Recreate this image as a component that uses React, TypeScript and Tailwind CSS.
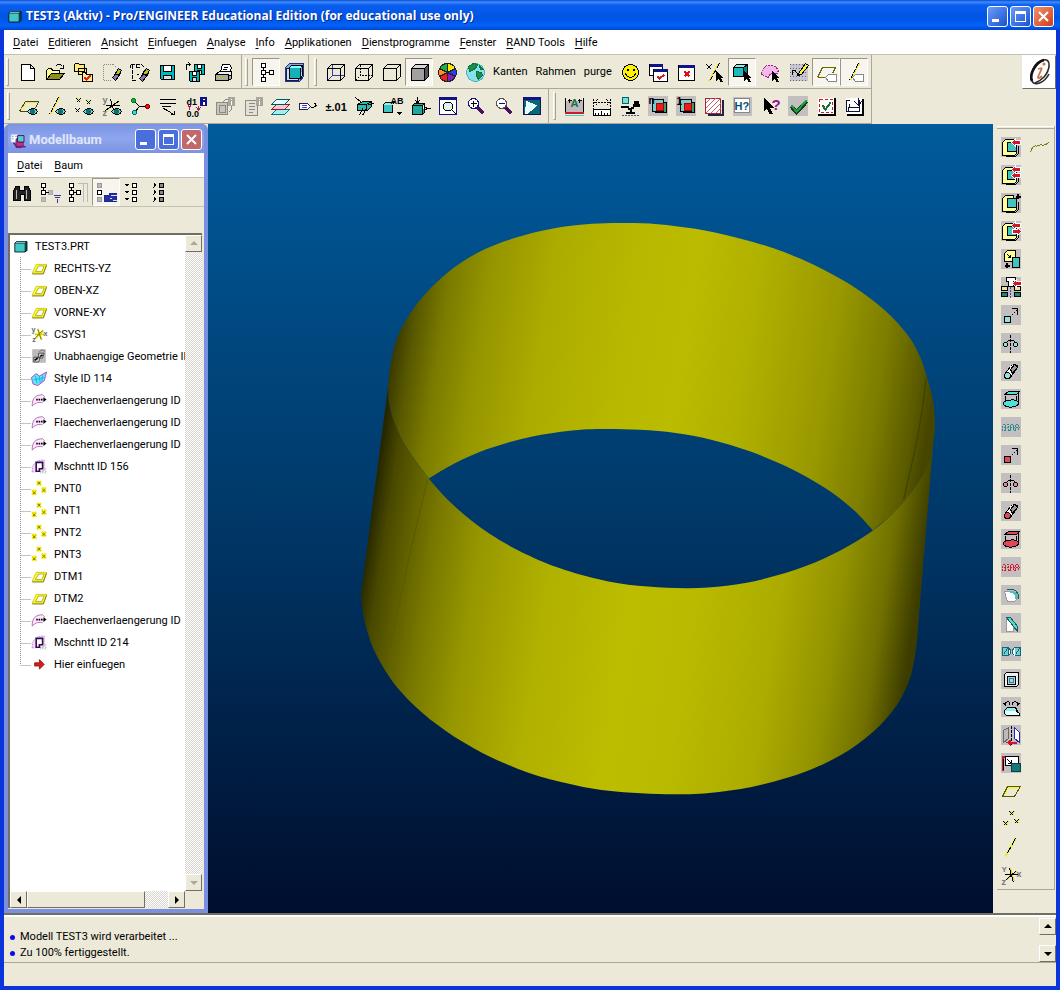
import React from "react";

/* ---------- icon drawing ---------- */

type Shape = [d: string, stroke?: string, fill?: string, width?: number, dash?: string];
type Glyph = { t: string; x: number; y: number; size: number; fill: string };
type Icon = { s: Shape[]; t?: Glyph[]; bg?: string };

const K = "#000";
const N = "none";
const T = "#3fc4c0";
const Y = "#ffff99";
const R = "#d01828";
const G = "#8c8c84";
const BG = "#c3bfc1";

const eye: Shape[] = [
  ["M9 15c3-4 8-4 10 0c-2 4-7 4-10 0z", K, "#9cc", 1],
  ["M12 15a2 2 0 1 0 4 0a2 2 0 1 0-4 0z", "#077", "#077", 1],
];
const cursor: Shape[] = [["M11 8v11l3-3l2 4l2-1l-2-4h3z", K, K, 0]];
const floppy = (x: number, y: number, k: number): Shape[] => [
  [`M${x} ${y}h${k}v${k}h${1 - k}l-1-1z`, K, "#00b8b8"],
  [`M${x + 3} ${y}h${k - 6}v${Math.round(k / 2) - 1}h${6 - k}z`, K, "#fff"],
  [`M${x + 3} ${y + k}v-4h${k - 6}v4z`, K, "#ddd"],
];
const cube = (inner: Shape[]): Shape[] => [
  ...inner,
  ["M2 6h13v12H2zM2 6l4-4h13M15 6l4-4v12l-4 4", K],
];
const padYellow: Shape[] = [
  ["M1 5l3-3h8v3H6v9h9v2l-2 2H1z", K, Y, 1],
  ["M6 5h9v9H6z", K, T],
  ["M17 8v8l-3 3H4", K],
];
const arrowL = (x: number, y: number): Shape[] => [
  [`M${x} ${y}l4-4v2h5v4h-5v2z`, "#fff", R, 1],
];
const arrowR = (x: number, y: number): Shape[] => [
  [`M${x} ${y}l-4-4v2h-5v4h5v2z`, "#fff", R, 1],
];
const plus = (x: number, y: number): Shape => [`M${x - 2} ${y}h5M${x + 0.5} ${y - 2.5}v5`, K, N, 2];
const xs = (c: string): Shape[] => [
  ["M8 2l4 4M12 2l-4 4M2 12l4 4M6 12l-4 4M13 10l4 4M17 10l-4 4", c],
];
const swept = (c: string): Shape[] => [
  ["M3 5l4-3h11l-3 3H3z", K, c],
  ["M4 6v5M15 6v7M17 3v8", K],
  ["M2 14c0-4 15-5 15-1c0 6-15 6-15 1z", K, c],
];
const helix = (c: string): Shape[] => [
  ["M3 7H1v6h3V7h3v6M7 13h2V7M9 7h3v6M12 13h2V7M14 7h3v6", c, N, 1, "2 1"],
  ["M2 10h16", c, N, 1, "2 1"],
];
const extrude = (c: string): Shape[] => [
  ["M3 11h6v6H3z", K, c],
  ["M10 10l5-5", K, N, 1, "2 1"],
  ["M10 3h6v6", K],
];
const revolve = (c: string): Shape[] => [
  ["M9 1v18", K, N, 1, "3 1"],
  ["M2 11a2 2 0 1 0 4 0a2 2 0 1 0-4 0M12 11a2 2 0 1 0 4 0a2 2 0 1 0-4 0", K, c],
  ["M5 9c2-3 7-3 9 0", K],
];
const pipe = (c: string): Shape[] => [
  ["M3 13l6-8c2-3 8-2 7 1l-7 10z", K, "#fff"],
  ["M9 8l4-5l3 3l-5 6z", K, "#999"],
  ["M3 14a3 3 0 1 0 6 0a3 3 0 1 0-6 0z", K, c],
];
const doubleBox = (): Shape[] => [
  ["M7 6h11v10H7z", K, "#3a9a6a"],
  ["M4 3h11v12H4z", K, "#7cc"],
  ["M8 7h7v7H8z", "#a00808", "#f01818"],
];

const I: Record<string, Icon> = {
  new: { s: [["M4 2h9l4 4v12H4zM13 2v4h4", K, "#fff"]] },
  open: {
    s: [
      ["M1 17V8l2-2h3l1 2h7v4", K, Y],
      ["M1 17l5-6h13l-5 6z", K, "#8f8f20"],
      ["M10 4c2-3 5-3 7 0M18 2v4h-4", K],
    ],
  },
  workdir: {
    s: [
      ["M1 2l1-1h3l1 1h5v7H1zM5 6h8v6H5z", K, "#ffee70"],
      ["M9 10h3l1 2h6v7H9z", K, "#ffee88"],
      ["M11 15l2 2l4-4", "#e02020", N, 2],
    ],
  },
  erase: {
    s: [
      ["M2 2h10l3 3M2 2v16h8", G, N, 1, "1 1"],
      ["M11 15l3 3l5-7l-2-3z", K, "#8c7ab0"],
      ["M14 11l3-5l3 2l-3 5z", K, "#bcbc20"],
    ],
  },
  erase2: {
    s: [
      ["M1 2h11l3 3M3 2v16h4M1 2v3", K, N, 1, "4 1"],
      ["M7 2v3h3M7 12h2", K],
      ["M10 16l3 3l6-8l-2-3z", K, "#8c7ab0"],
      ["M13 11l4-5l3 2l-3 5z", K, "#bcbc20"],
    ],
  },
  save: { s: floppy(3, 3, 14) },
  saveall: { s: [...floppy(9, 2, 10), ...floppy(4, 9, 10), ["M1 7V2h4M3 0l2 2l-2 2", K]] },
  print: {
    s: [
      ["M7 9L9 2h7l2 3l-2 5z", K, "#fff"],
      ["M10 5h4M9 7h4", K],
      ["M2 12l4-3h12v3l-3 2H2z", K, "#eee"],
      ["M2 12h13v6H2zM15 14l3-2v4l-3 2z", K, "#aaa"],
      ["M4 15h8", "#c0c000"],
    ],
  },
  tree: { s: [["M5 1h4v4H5zM5 8h4v4H5zM5 15h4v4H5zM13 8h4v4h-4z", K, "#fff"], ["M7 5v3M7 12v3M9 10h4", K]] },
  window3d: {
    s: [
      ["M1 5l4-4h14v13l-4 5H1z", "#238", "#88a8d8"],
      ["M2 6h12v12H2z", "#124", "#cde"],
      ["M5 5h11v11H5z", K, "#18b0b8"],
      ["M5 5l2-2h11l-2 2M18 3v10l-2 3", K, "#8ff"],
    ],
  },
  wire: { s: cube([["M2 18l5-5h12M7 13V2", "#3838a8"]]) },
  hidden: { s: cube([["M2 18l5-5h12M7 13V2", K, N, 1, "2 1"]]) },
  nohidden: { s: cube([]) },
  shaded: {
    s: [
      ["M2 6h13v12H2z", K, "#a4a0a0"],
      ["M2 6l4-4h13l-4 4z", K, "#d8d8d8"],
      ["M15 6l4-4v12l-4 4z", K, "#555"],
    ],
  },
  wheel: {
    s: [
      ["M10 10L10 1A9 9 0 0 1 18 6z", "#222", "#ffe800"],
      ["M10 10L18 6A9 9 0 0 1 18 14z", "#222", "#2040ff"],
      ["M10 10L18 14A9 9 0 0 1 10 19z", "#222", "#8020c0"],
      ["M10 10L10 19A9 9 0 0 1 2 14z", "#222", "#f02020"],
      ["M10 10L2 14A9 9 0 0 1 2 6z", "#222", "#ff9020"],
      ["M10 10L2 6A9 9 0 0 1 10 1z", "#222", "#20b040"],
    ],
  },
  globe: {
    s: [
      ["M1 10a9 9 0 1 0 18 0a9 9 0 1 0-18 0z", "#48b8c8", "#88e0e8"],
      ["M3 4l5-3l4 1l-1 3l-4 3l-3 1zM11 9l5 1l1 3l-4 4l-2-4zM14 3l4 4l-3 0z", "#107040", "#189048"],
    ],
  },
  smile: {
    s: [
      ["M2 10a8 8 0 1 0 16 0a8 8 0 1 0-16 0z", K, "#fff200"],
      ["M7 6v2M13 6v2", K, N, 2],
      ["M5 11c2 5 8 5 10 0", K],
    ],
  },
  winCheck: {
    s: [
      ["M1 2h13v11H1z", K, "#fff"],
      ["M1 3h13", "#118", N, 3],
      ["M5 7h14v12H5z", K, "#fff"],
      ["M5 8h14", "#118", N, 3],
      ["M9 14l2 2l5-4", R, N, 2],
    ],
  },
  winX: { s: [["M2 3h16v15H2z", K, "#fff"], ["M2 4h16", "#118", N, 3], ["M8 9l5 5M13 9l-5 5", "#e01010", N, 2]] },
  axisSel: { s: [["M2 2l5 5M7 2l-5 5", K], ["M14 1L4 19", "#e8e020", N, 1], ["M15 1L5 19", K, N, 1, "5 2"], ...cursor] },
  cubeSel: {
    s: [
      ["M1 5h10v9H1z", K, "#20b8b8"],
      ["M1 5l3-3h11l-4 3z", K, "#8ee"],
      ["M11 5l4-3v9l-4 3z", K, "#088"],
      ...cursor,
    ],
  },
  quiltSel: { s: [["M1 12C1 2 13-1 18 8l-2 4c-4-3-6-2-8 3z", "#a020a0", "#f4b8e8", 1, "2 1"], ...cursor] },
  sketch: {
    s: [
      ["M1 1h18v17H1z", N, "#c8c4d0"],
      ["M1 2h17M1 6h17M1 10h17M1 14h17M1 18h17", "#667", N, 1, "1 2"],
      ["M5 13c-4-6 1-7 3-3s4 3 4-2", K],
      ["M10 11l7-10l3 2l-7 9l-4 1z", K, "#ffee40"],
    ],
  },
  planeTag: {
    s: [["M1 15L6 5h13l-3 6M1 15h8", "#6a6a00"], ["M9 15l3-3h8v7h-8z", "#888", "#fff"]],
  },
  axisTag: { s: [["M14 1L5 18", K, N, 1, "5 1"], ["M15 1L6 18", "#e8e820"], ["M8 15l3-3h8v7h-8z", "#888", "#fff"]] },

  planeEye: { s: [["M1 15L7 5h13l-3 7M1 15h8", "#4a4a00"], ["M2 14L8 6h10", "#f0e840"], ...eye] },
  axisEye: { s: [["M12 1L3 18", K, N, 1, "5 1"], ["M13 1L4 18", "#e8e820"], ...eye] },
  pntEye: { s: [["M3 1l4 4M13 3l4 4", "#e8e820"], ["M2 2l4 4M6 2l-4 4M12 4l4 4M16 4l-4 4M1 12l4 4M5 12l-4 4", K], ...eye] },
  csysEye: {
    s: [["M4 14L18 4", "#e8e820"], ["M3 14L17 4M3 9h14M8 3l4 14", K], ...eye],
    t: [{ t: "y", x: 0, y: 6, size: 9, fill: "#777" }, { t: "z", x: 0, y: 19, size: 9, fill: "#777" }],
  },
  nodes: {
    s: [
      ["M3 4l6 6l-5 6M9 10h8", K],
      ["M1 4a2 2 0 1 0 4 0a2 2 0 1 0-4 0z", "#072", "#10b040"],
      ["M2 16a2 2 0 1 0 4 0a2 2 0 1 0-4 0z", "#066", "#30e0e0"],
      ["M15 10a2 2 0 1 0 4 0a2 2 0 1 0-4 0z", "#800", "#f01010"],
    ],
  },
  notes: { s: [["M1 3h16M1 7h16M3 10h9", K], ["M5 12l4 2l6 4M12 18h4v-4", K]] },
  dims: {
    s: [["M3 9v4M1 11l2-3l2 3M12 9v4M10 11l2 3l2-3", "#b01850", N, 1], ["M14 1h6v8h-6z", "#118", "#118"], ["M17 5v3M17 2v1", "#fff", N, 2]],
    t: [{ t: "d1", x: 0, y: 8, size: 9, fill: K }, { t: "0.0", x: 0, y: 20, size: 9, fill: K }],
  },
  infoBox: {
    s: [["M2 6h11v12H2z", G, "#c8c4bc"], ["M5 9h6v7H5zM8 6l3-3h6v10l-3 3", G], ["M14 1h6v8h-6z", "#aaa69c", "#aaa69c"], ["M17 4v4M17 2v1", "#fff"]],
  },
  infoDoc: { s: [["M3 4h12v15H3z", G, "#e4e0d8"], ["M6 7h6M6 10h6M6 13h6M6 16h4", G], ["M14 1h6v8h-6z", "#aaa69c", "#aaa69c"], ["M17 4v4M17 2v1", "#fff"]] },
  layers: {
    s: [
      ["M1 18l5-5h13l-5 5z", "#078", "#a0f0f0"],
      ["M1 13l5-5h13l-5 5z", "#a01030", "#f8c8d0"],
      ["M1 8l5-5h13l-5 5z", "#056", "#e0ffff"],
    ],
  },
  tag: { s: [["M1 7h8l3 3l-3 3H1z", "#224", "#fff"], ["M3 9h5M3 11h5", "#44c"], ["M12 11c6 0 7-3 4-4", K]] },
  tol: { s: [], t: [{ t: "±.01", x: -1, y: 14, size: 11, fill: K }] },
  orient: {
    s: [["M3 8l5-3h9v5l-4 4H3z", K, "#30b8b0"], ["M3 8h9v6M12 8l5-3", K], ["M1 1l6 5M14 8l6-1M8 12l-3 7M8 19l4-7", K]],
  },
  views: {
    s: [["M1 8h9v8H1z", K, T], ["M1 8l2-2h9l-2 2", K, "#9ee"], ["M14 15h6l-3 4z", K, K, 0]],
    t: [{ t: "AB", x: 8, y: 7, size: 9, fill: K }],
  },
  refit: { s: [["M2 9h10v9H2zM2 9l2-2h10l-2 2M14 7v9l-2 2", K, "#20a8a0"], ["M7 0v6M5 4l2 3l2-3M20 12h-5M17 10l-3 2l3 2", K]] },
  zoomWin: { s: [["M1 1h17v17H1z", "#118", "#fff"], ["M1 2h17", "#118", N, 3], ["M5 10a4 4 0 1 0 9 0a4 4 0 1 0-9 0M13 13l5 5", K, "#e0f0f0", 1]] },
  zoomIn: { s: [["M2 7a5 5 0 1 0 10 0a5 5 0 1 0-10 0z", "#118", "#fff"], ["M7 4v6M4 7h6", K], ["M11 11l6 6", "#4a1060", N, 3]] },
  zoomOut: { s: [["M2 7a5 5 0 1 0 10 0a5 5 0 1 0-10 0z", "#555", "#fff"], ["M4 7h6", "#118"], ["M11 11l6 6", "#4a1060", N, 3]] },
  saved: { s: [["M1 1h17v17H1z", "#115", "#086878"], ["M1 2h17", "#118", N, 3], ["M4 5l10 4L5 17H3z", "#fff", "#dff"]] },

  fitA: {
    s: [["M1 4h18v12H1z", N, "#c0b8bc"], ["M1 1v14M19 1v14M3 4h4M13 4h4M5 2v4M15 2v4", K], ["M0 16h19", R, N, 2], ["M0 19h19", "#38d8d8"]],
    t: [{ t: "A", x: 6, y: 10, size: 11, fill: "#187040" }],
  },
  ruler: { s: [["M1 2v10M18 2v10M2 6h15M5 3L2 6l3 3M14 3l3 3l-3 3", K, N, 1, "2 1"], ["M1 13h17v6H1z", K, "#fff"], ["M3 16v3M6 16v3M9 14v5M12 16v3M15 16v3", K]] },
  scale: { s: [["M2 1h6v6H2z", "#066", "#7dd"], ["M0 9h8v2H0zM7 12l6-2v2l-6 2zM12 7h7v3h-7zM13 4h5v3h-5zM9 12h2v4H9zM5 15h9v2H5z", K, K, 0], ["M1 19h17", "#557", N, 1, "2 1"]] },
  partN: { s: doubleBox(), t: [{ t: "n", x: 0, y: 7, size: 10, fill: K }], bg: BG },
  part1: { s: doubleBox(), t: [{ t: "1", x: 0, y: 8, size: 10, fill: K }], bg: BG },
  hatch: {
    s: [["M1 2h15v15H1z", "#a02838", "#fff"], ["M1 7l5-5M1 12L11 2M1 17L16 2M6 17L16 7M11 17l5-5", "#d06070", N, 1], ["M18 3v15H3", "#224", N, 2]],
  },
  hq: { s: [["M0 0h19v19H0z", N, BG], ["M2 2h15v14H2z", "#888", "#fff"]], t: [{ t: "H?", x: 2, y: 13, size: 11, fill: "#055070" }] },
  whats: { s: [["M3 1v14l3-3l3 6l3-1l-3-6h4z", K, K, 0]], t: [{ t: "?", x: 11, y: 13, size: 15, fill: "#901890" }] },
  check: { s: [["M3 10l5 6L18 5", "#10401a", N, 4], ["M3 9l5 6L18 4", "#20a040", N, 2]], bg: BG },
  checkBox: { s: [["M1 1h17v17H1z", N, "#fff"], ["M3 3h13v13H3z", R, N, 1, "3 2"], ["M6 9l3 4l5-7", "#187030", N, 2], ["M18 1v17H1", K, N, 2]] },
  importBox: { s: [["M1 1h16v16H1z", N, "#fff"], ["M5 4H2v11h13V4h-2M4 10v4M14 1v7M10 5l4 4l3-4M5 7v4h9", "#113", N, 1], ["M18 2v16H2", K, N, 2]] },

  binoc: { s: [["M1 18V9l2-5h4v4h5V4h4l2 5v9h-6v-6h-4v6z", K, "#222"], ["M4 7v9M14 7v9", "#bbb"]] },
  filter: { s: [["M1 1h4v4H1zM1 8h4v4H1z", K, "#fff"], ["M1 15h4v4H1zM8 8h4v4H8z", "#aaa", "#bbb"], ["M3 5v3M5 10h3", K], ["M13 13h7M14 15h5M16 17h1v3", "#339"]] },
  columns: { s: [["M9 1h10v18M15 1v18", "#bbb"], ["M1 1h4v4H1zM1 8h4v4H1zM1 15h4v4H1zM8 8h4v4H8z", K, "#fff"], ["M3 5v3M3 12v3M5 10h3", K]] },
  featDisp: { s: [["M1 1h4v4H1zM1 15h4v4H1z", "#999", "#bbb"], ["M1 8h4v4H1z", K, "#fff"], ["M8 13h5v-2h7v8H8z", "#229", "#239"], ["M14 13h6M13 16h2M16 18h4", "#dde"]] },
  expandAll: { s: [["M-1 1h6l-3 3zM-1 8h6l-3 3zM-1 15h6l-3 3z", K, K, 0], ["M8 1h4v4H8zM8 8h4v4H8zM8 15h4v4H8z", K, "#fff"]] },
  collapseAll: { s: [["M1 0v5l3-2.5zM1 7v5l3-2.5zM1 14v5l3-2.5z", K, K, 0], ["M7 1h4v4H7zM7 8h4v4H7zM7 15h4v4H7z", K, "#888"]] },

  refAdd: { s: [...padYellow, ...arrowL(10, 5)], bg: BG },
  refTwo: { s: [...padYellow, ...arrowL(10, 4), ...arrowL(10, 10)], bg: BG },
  refPlus: { s: [...padYellow, plus(16, 3)], bg: BG },
  refSwap: { s: [...padYellow, ...arrowL(10, 4), ...arrowR(20, 10)], bg: BG },
  refCopy: { s: [["M3 4l3-3h8v11H3z", K, Y], ["M6 5l3 3M9 5v3H6", K], ["M11 8h7v10h-7z", K, T], plus(5, 16)], bg: BG },
  section: {
    s: [["M5 0h9v4h-2v5H7V4H5z", K, "#fff"], ["M0 9h6v4H0zM13 9h6v4h-6z", K, "#e8e890"], ["M0 15h6v4H0zM13 15h6v4h-6z", K, "#188878"], ["M9 9v11", "#44a", N, 1, "2 1"], ...arrowL(11, 6)],
    bg: BG,
  },
  ext: { s: extrude("#8ee4dc"), bg: BG },
  rev: { s: revolve("#8ee4dc"), bg: BG },
  pip: { s: pipe("#8ee4dc"), bg: BG },
  swp: { s: swept("#50e0d8"), bg: BG },
  hel: { s: helix("#2a8c8c"), bg: BG },
  extR: { s: extrude("#e04858"), bg: BG },
  revR: { s: revolve("#e88890"), bg: BG },
  pipR: { s: pipe("#e04858"), bg: BG },
  swpR: { s: swept("#e04858"), bg: BG },
  helR: { s: helix("#d02030"), bg: BG },
  round: { s: [["M3 6h7c4 0 6 3 6 7l-3 3H6z", "#999", "#fff"], ["M6 4c7-2 12 3 11 10", "#106060", N, 1], ["M8 6c5 0 7 3 7 7", T, N, 2]], bg: BG },
  chamfer: { s: [["M5 4l3 3l4 6v5H5z", "#999", "#fff"], ["M5 4h4l7 9v5l-4-5z", "#106060", "#60d8d0"]], bg: BG },
  hole: { s: [["M1 6h6v8H1zM13 6h6v8h-6z", "#167", "#7cc"], ["M7 6c3 3 3 6 0 8M13 6c-3 3-3 6 0 8", "#167", "#fff"], ["M2 13l4-6M14 13l4-6", "#167"]], bg: BG },
  shell: { s: [["M3 5l2-2h12v12l-2 2H3z", K, "#eee"], ["M6 7h8v8H6z", K, "#a0d8e0"], ["M8 9h4v4H8z", "#479"]], bg: BG },
  draft: { s: [["M3 13h11l4 3v2H5l-2-2z", K, "#e8ffff"], ["M3 13l3-3h8l2 4", K, "#8ee"], ["M3 6c4-3 5-2 5 1M17 6c-4-3-6-2-6 1", K, N, 1], ["M0 5h4v4zM19 5h-4v4z", K, K, 0]], bg: BG },
  mirror: { s: [["M2 5l5-3v11l-5 4z", "#666", "#bbb"], ["M13 2l5 5v10l-5-4z", "#2020c0", "#fff"], ["M10 0v20", K, N, 1, "3 1"], ["M5 17l4-3v2h6v2H9v2z", R, R, 0]], bg: BG },
  copyGeo: { s: [["M1 17V3h3", R, N, 2], ["M4 3h13v9H4zM2 5v11", K, "#fff"], ["M6 6l4 4M10 6v4H6", K], ["M10 10h9v8h-9z", "#044", "#187878"]], bg: BG },
  plane: { s: [["M2 14L7 6h11", "#f0f060", N, 2], ["M1 15L6 5h13l-6 10z", "#5a5a00"]] },
  points: { s: [["M9 2l4 4M13 2l-4 4M3 12l4 4M7 12l-4 4M14 10l4 4M18 10l-4 4", "#e4e030", N, 1], ...xs(K)] },
  axis: { s: [["M14 1L4 19", "#e8e840", N, 2], ["M14 1L4 19", K, N, 1, "7 3"]] },
  csys: {
    s: [["M6 14L16 5M9 3l4 13", "#d8d820"], ["M5 14L15 5M3 9h13M8 3l4 14", K]],
    t: [{ t: "Y", x: 0, y: 6, size: 8, fill: "#777" }, { t: "x", x: 15, y: 11, size: 9, fill: "#777" }, { t: "z", x: 0, y: 19, size: 9, fill: "#777" }],
  },
  curve: { s: [["M1 15c3-10 5-5 8-7s6 2 10-3", "#7c7c18"]] },

  tPart: { s: [["M3 6l2-2h13v11l-2 2H3z", K, "#40c8c8"], ["M5 4h13l-2 2H3z", "#033", "#b0f4f0"], ["M16 6l2-2v11l-2 2z", K, "#088"]] },
  tPlane: { s: [["M1 16L6 5h13l-4 11z", "#c8c000", "#ffff30", 1], ["M5 14l4-7h7l-3 7z", "#a8a000", "#fff"], ["M1 17h14l4-11", "#706800"]] },
  tCsys: {
    s: [["M5 15L15 5M4 10h12M8 3l5 14", "#d8d000", N, 2], ["M5 14L14 5M8 4l4 12", "#777000"]],
    t: [{ t: "y", x: 0, y: 7, size: 9, fill: "#666" }, { t: "x", x: 15, y: 12, size: 9, fill: "#666" }, { t: "z", x: 1, y: 19, size: 9, fill: "#666" }],
  },
  tGeo: { s: [["M1 1h17v17H1z", N, "#bbb"], ["M3 11h8l-2 6H3zM9 6h7l-2 6H9z", "#333", "#ddd"], ["M4 15l4-3M11 10l3-2", K, N, 2], ["M10 4c3-3 5-2 7 0", "#555"]] },
  tStyle: { s: [["M0 9l6-5l4 3l9-5l-3 11l-8 6l-6-2z", "#b828c0", "#60e8f8", 1], ["M5 7l2 9M10 7l1 9M14 6l-1 8M3 12l13-3", "#20a0d8"]] },
  tSurf: { s: [["M2 15C2 7 6 4 13 4l3 4l-2 4c-5-1-9 0-12 3z", N, "#fbe8fb"], ["M1 17C1 7 5 3 14 3M1 17c5-5 9-5 13-4M14 3l3 3", "#a848b0", N, 1], ["M6 9h8", K, N, 2, "2 1"], ["M15 6l4 3l-4 3z", K, K, 0]] },
  tMerge: { s: [["M1 17C1 6 6 2 16 2v14z", "#c078c8", "#f4dcf6", 1, "2 1"], ["M6 5h8v8h-4v3H6z", "#301050", "#fff", 2], ["M11 18h7v-6", "#70a070", N, 1, "1 1"]] },
  tPnt: { s: [["M7 1l5 5M12 1l-5 5M1 12l5 6M6 12l-5 6M13 9l5 6M18 9l-5 6", "#f0e800", N, 3], ["M8 2l3 3M11 2l-3 3M2 14l3 3M5 14l-3 3M14 11l3 3M17 11l-3 3", "#6a6400"]] },
  tArrow: { s: [["M4 8h6V4l6 6l-6 6v-4H4z", "#801010", "#e01818"]] },
  app: { s: [["M1 3h8v9H1z", "#ddd", "#fff"], ["M2 5h2M6 5h2M2 8h2", "#39c"], ["M7 8h9v9l-3 2H7z", "#602080", "#c03070"], ["M9 4h8v8H9z", "#205", "#60c8c8"], ["M4 13l4 5h11", "#602080", N, 2]] },
};

function Ico({ name, small }: { name: string; small?: boolean }) {
  const { s, t, bg } = I[name];
  return (
    <svg
      viewBox="-0.5 -0.5 20 20"
      className={`shrink-0 ${small ? "size-4" : "size-5"}`}
      shapeRendering={small ? "auto" : "crispEdges"}
      aria-hidden="true"
      overflow="visible"
    >
      {bg && <rect x="-0.5" y="-0.5" width="20" height="20" fill={bg} />}
      {s.map(([d, stroke = K, fill = N, w = 1, dash], i) => (
        <path key={i} d={d} stroke={w ? stroke : N} fill={fill} strokeWidth={w} strokeDasharray={dash} />
      ))}
      {t?.map((g) => (
        <text key={g.t + g.y} x={g.x} y={g.y} fontSize={g.size} fill={g.fill} fontWeight={700} fontFamily="Liberation Sans, sans-serif">
          {g.t}
        </text>
      ))}
    </svg>
  );
}

/* ---------- toolbar parts ---------- */

function ToolButton({ name, pressed }: { name: string; pressed?: boolean }) {
  return (
    <button
      type="button"
      aria-label={name}
      aria-pressed={pressed}
      className={`flex size-7 shrink-0 items-center justify-center border ${
        pressed ? "border-t-[#9a978a] border-r-white border-b-white border-l-[#9a978a] bg-[#f7f5ee]" : "border-transparent"
      }`}
    >
      <Ico name={name} />
    </button>
  );
}

function Handle() {
  return <div className="mr-1 h-7 w-[3px] shrink-0 border border-t-white border-r-[#a5a294] border-b-[#a5a294] border-l-white" />;
}

function Bar({ children, className = "" }: { children: React.ReactNode; className?: string }) {
  return (
    <div className={`flex h-full items-center border-r border-b border-[#aca899] ${className}`}>
      <Handle />
      {children}
    </div>
  );
}

function Tools({ names, pressed = [] }: { names: string[]; pressed?: string[] }) {
  return (
    <>
      {names.map((n) => (
        <ToolButton key={n} name={n} pressed={pressed.includes(n)} />
      ))}
    </>
  );
}

function MenuItem({ label }: { label: string }) {
  return (
    <button type="button" className="whitespace-nowrap">
      <span className="underline underline-offset-2">{label[0]}</span>
      {label.slice(1)}
    </button>
  );
}

function WinButtons({ inactive }: { inactive?: boolean }) {
  const base = "flex size-[21px] items-center justify-center rounded-[3px] border border-white";
  const blue = inactive ? "bg-[#4a6fdc]" : "bg-linear-to-br from-[#6a9cf8] to-[#1c50d0]";
  const red = inactive ? "bg-[#c0686c]" : "bg-linear-to-br from-[#f09070] to-[#d03a10]";
  return (
    <div className="flex gap-[2px]">
      <button type="button" aria-label="Minimieren" className={`${base} ${blue}`}>
        <svg viewBox="0 0 17 17" className="size-[17px]"><path d="M3 11h7v3H3z" fill="#fff" /></svg>
      </button>
      <button type="button" aria-label="Maximieren" className={`${base} ${blue}`}>
        <svg viewBox="0 0 17 17" className="size-[17px]"><path d="M3 3h11v11H3zM4 6v7h9V6z" fill="#fff" fillRule="evenodd" /></svg>
      </button>
      <button type="button" aria-label="Schliessen" className={`${base} ${red}`}>
        <svg viewBox="0 0 17 17" className="size-[17px]"><path d="M4 4l9 9M13 4l-9 9" stroke="#fff" strokeWidth="2" /></svg>
      </button>
    </div>
  );
}

const arrows = {
  up: "M4 9h8L8 5z",
  down: "M4 6h8l-4 4z",
  left: "M10 4v8L6 8z",
  right: "M6 4v8l4-4z",
};

function ScrollButton({ dir, dim }: { dir: keyof typeof arrows; dim?: boolean }) {
  return (
    <button
      type="button"
      aria-label={dir}
      className="flex size-[17px] shrink-0 items-center justify-center border border-t-white border-r-[#716f64] border-b-[#716f64] border-l-white bg-[#ece9d8]"
    >
      <svg viewBox="0 0 16 16" className="size-4 shrink-0"><path d={arrows[dir]} fill={dim ? "#aca899" : "#000"} /></svg>
    </button>
  );
}

const dither = "bg-[conic-gradient(#d8d5cf_25%,#fff_0_50%,#d8d5cf_0_75%,#fff_0)] bg-[length:2px_2px]";

/* ---------- model tree ---------- */

const nodes: [icon: string, label: string][] = [
  ["tPlane", "RECHTS-YZ"],
  ["tPlane", "OBEN-XZ"],
  ["tPlane", "VORNE-XY"],
  ["tCsys", "CSYS1"],
  ["tGeo", "Unabhaengige Geometrie ID"],
  ["tStyle", "Style ID 114"],
  ["tSurf", "Flaechenverlaengerung ID"],
  ["tSurf", "Flaechenverlaengerung ID"],
  ["tSurf", "Flaechenverlaengerung ID"],
  ["tMerge", "Mschntt ID 156"],
  ["tPnt", "PNT0"],
  ["tPnt", "PNT1"],
  ["tPnt", "PNT2"],
  ["tPnt", "PNT3"],
  ["tPlane", "DTM1"],
  ["tPlane", "DTM2"],
  ["tSurf", "Flaechenverlaengerung ID"],
  ["tMerge", "Mschntt ID 214"],
  ["tArrow", "Hier einfuegen"],
];

function ModelTree() {
  return (
    <aside className="flex w-[204px] shrink-0 flex-col rounded-t-md border-x-4 border-b-4 border-[#7b8fe0] bg-[#ece9d8]">
      <header className="flex h-[29px] items-center bg-linear-to-b from-[#7a94e4] via-[#8ea6ee] to-[#7b93e2] pt-[2px] pr-[2px] pl-[2px]">
        <Ico name="app" small />
        <h2 className="ml-[3px] flex-1 text-[13px] font-bold text-[#e0e6fa]">Modellbaum</h2>
        <WinButtons inactive />
      </header>
      <nav className="flex h-6 items-center gap-3 bg-white px-[9px] pt-[2px]">
        <MenuItem label="Datei" />
        <MenuItem label="Baum" />
      </nav>
      <div className="flex h-[30px] items-center border-y border-[#c5c2b4]">
        <Tools names={["binoc", "filter", "columns", "featDisp", "expandAll", "collapseAll"]} pressed={["featDisp"]} />
      </div>
      <div className="h-[26px] shrink-0" />
      <div className="mr-[2px] mb-px flex min-h-0 flex-1 flex-col border-t-2 border-l-2 border-[#716f64]">
        <div className="flex min-h-0 flex-1">
          <ul className="min-w-0 flex-1 overflow-hidden bg-white whitespace-nowrap">
            <li className="flex h-[22px] items-center gap-[7px] pl-[2px]">
              <Ico name="tPart" small />
              <span className="pt-px">TEST3.PRT</span>
            </li>
            {nodes.map(([icon, label], i) => (
              <li key={i} className="flex h-[22px] items-center pl-[10px]">
                <svg viewBox="0 0 11 22" className="h-[22px] w-[11px] shrink-0" aria-hidden="true">
                  <path
                    d={i === nodes.length - 1 ? "M.5 0V12M.5 12.5H11" : "M.5 0V22M.5 12.5H11"}
                    stroke="#8a8a8a"
                    strokeDasharray="1 1"
                    fill="none"
                  />
                </svg>
                <Ico name={icon} small />
                <span className="ml-[7px] pt-px">{label}</span>
              </li>
            ))}
          </ul>
          <div className={`flex w-[17px] shrink-0 flex-col justify-between ${dither}`}>
            <ScrollButton dir="up" dim />
            <ScrollButton dir="down" dim />
          </div>
        </div>
        <div className="flex h-[17px]">
          <ScrollButton dir="left" />
          <div className={`flex flex-1 ${dither}`}>
            <div className="w-[84%] border border-t-white border-r-[#716f64] border-b-[#716f64] border-l-white bg-[#ece9d8]" />
          </div>
          <ScrollButton dir="right" />
          <div className="w-[17px] bg-[#ece9d8]" />
        </div>
      </div>
    </aside>
  );
}

/* ---------- 3D view ---------- */

type Pt = [number, number];

/* Catmull-Rom spline through the points, written as cubic segments. */
function spline(p: Pt[], start: "M" | "L" = "M") {
  let d = `${start}${p[0]}`;
  for (let i = 0; i < p.length - 1; i++) {
    const a = p[i - 1] ?? p[i];
    const b = p[i];
    const c = p[i + 1];
    const e = p[i + 2] ?? c;
    d += `C${b[0] + (c[0] - a[0]) / 6} ${b[1] + (c[1] - a[1]) / 6} ${c[0] - (e[0] - b[0]) / 6} ${c[1] - (e[1] - b[1]) / 6} ${c[0]} ${c[1]}`;
  }
  return d;
}

const topBack: Pt[] = [[122, 470], [129, 410], [150, 335], [200, 255], [270, 184], [350, 131], [440, 95], [540, 70], [640, 58], [725, 56], [805, 59], [900, 71], [1000, 92], [1100, 121], [1200, 162], [1300, 217], [1380, 277], [1438, 340], [1470, 397], [1492, 465], [1503, 510], [1507, 560]];
const topFront: Pt[] = [[122, 470], [125, 515], [140, 567], [172, 630], [225, 703], [290, 773], [380, 844], [480, 899], [570, 935], [680, 964], [780, 977], [885, 981], [980, 975], [1080, 956], [1180, 925], [1270, 884], [1350, 835], [1410, 782], [1460, 720], [1490, 665], [1503, 610], [1507, 560]];
const innerBack: Pt[] = [[225, 703], [290, 665], [370, 630], [460, 603], [560, 585], [650, 578], [760, 580], [850, 588], [940, 605], [1040, 635], [1140, 677], [1230, 728], [1300, 782], [1350, 835]];
const bottomRim: Pt[] = [[53, 1000], [62, 1062], [90, 1145], [150, 1238], [240, 1322], [340, 1387], [450, 1438], [560, 1472], [680, 1494], [845, 1503], [960, 1497], [1070, 1478], [1180, 1445], [1270, 1403], [1350, 1345], [1410, 1278], [1445, 1205], [1460, 1130]];

const backWall = `${spline(topBack)}${spline([...topFront.slice(16)].reverse(), "L")}${spline([...innerBack].reverse(), "L")}${spline([...topFront.slice(0, 5)].reverse(), "L")}Z`;
const frontWall = `${spline(topFront)}${spline([...bottomRim].reverse(), "L")}Z`;

const backStops: [number, string][] = [[0, "#3c3c00"], [0.03, "#585800"], [0.08, "#7a7a00"], [0.15, "#949400"], [0.27, "#acac00"], [0.42, "#b8b800"], [0.53, "#bbbb00"], [0.65, "#b0b000"], [0.8, "#989800"], [0.9, "#7c7c00"], [0.97, "#5a5a00"], [1, "#464600"]];
const frontStops: [number, string][] = [[0, "#262600"], [0.03, "#484800"], [0.08, "#646400"], [0.12, "#787800"], [0.2, "#969600"], [0.33, "#b0b000"], [0.48, "#bcbc00"], [0.6, "#baba00"], [0.75, "#acac00"], [0.86, "#929200"], [0.94, "#707000"], [1, "#3c3c00"]];

function Viewport() {
  return (
    <main className="min-w-0 flex-1 bg-linear-to-b from-[#005b9c] via-[#003868] to-[#000e2e]">
      <svg viewBox="-334 -192 1988 1993" className="size-full" role="img" aria-label="TEST3">
        <defs>
          <linearGradient id="back" gradientUnits="userSpaceOnUse" x1="130" y1="430" x2="1480" y2="640">
            {backStops.map(([o, c]) => <stop key={o} offset={o} stopColor={c} />)}
          </linearGradient>
          <linearGradient id="front" gradientUnits="userSpaceOnUse" x1="85" y1="750" x2="1470" y2="960">
            {frontStops.map(([o, c]) => <stop key={o} offset={o} stopColor={c} />)}
          </linearGradient>
        </defs>
        <path d={backWall} fill="url(#back)" />
        <path d="M1484 450C1475 560 1450 660 1428 755" stroke="#404000" strokeWidth="3" fill="none" />
        <path d={frontWall} fill="url(#front)" />
        <path d="M222 705L176 900L128 1130" stroke="#5c5c00" strokeWidth="3" fill="none" />
      </svg>
    </main>
  );
}

/* ---------- page ---------- */

const menus = ["Datei", "Editieren", "Ansicht", "Einfuegen", "Analyse", "Info", "Applikationen", "Dienstprogramme", "Fenster", "RAND Tools", "Hilfe"];

const features = [
  "refAdd", "refTwo", "refPlus", "refSwap", "refCopy", "section", "ext", "rev", "pip", "swp", "hel", "extR", "revR", "pipR",
  "swpR", "helR", "round", "chamfer", "hole", "shell", "draft", "mirror", "copyGeo", "plane", "points", "axis", "csys",
];

export default function App() {
  return (
    <div className="flex min-h-screen flex-col border-x-4 border-b-4 border-[#0a35dc] bg-[#ece9d8] font-[Roboto,'Liberation_Sans',sans-serif] text-[11px] leading-4 text-black">
      <header className="-mx-1 flex h-[30px] items-center bg-[linear-gradient(to_bottom,#0a48d8_0,#3f8cf8_2px,#0a5ff0_5px,#0054e3_60%,#0062fa_85%,#0046d0_100%)] pt-[2px] pr-[6px] pl-[6px]">
        <Ico name="tPart" small />
        <h1 className="ml-1 flex-1 font-['Open_Sans',sans-serif] text-[12px] font-bold text-white [text-shadow:1px_1px_#0a2a90]">
          TEST3 (Aktiv) - Pro/ENGINEER Educational Edition (for educational use only)
        </h1>
        <WinButtons />
      </header>

      <nav className="flex h-[25px] items-center gap-[10px] border-b border-[#c5c2b4] bg-white px-[9px] pt-[2px]">
        {menus.map((m) => <MenuItem key={m} label={m} />)}
      </nav>

      <div className="flex justify-between">
        <div>
          <div className="flex h-[34px]">
            <Bar className="pr-1 pl-[2px]">
              <Tools names={["new", "open", "workdir", "erase", "erase2", "save", "saveall", "print"]} />
            </Bar>
            <Bar className="pl-[3px]">
              <Tools names={["tree", "window3d"]} pressed={["tree"]} />
            </Bar>
            <Bar className="pr-[3px] pl-[5px]">
              <Tools names={["wire", "hidden", "nohidden", "shaded", "wheel", "globe"]} pressed={["shaded"]} />
              <button type="button" className="px-1">Kanten</button>
              <button type="button" className="px-1">Rahmen</button>
              <button type="button" className="px-1">purge</button>
              <Tools
                names={["smile", "winCheck", "winX", "axisSel", "cubeSel", "quiltSel", "sketch", "planeTag", "axisTag"]}
                pressed={["cubeSel", "planeTag", "axisTag"]}
              />
            </Bar>
          </div>
          <div className="flex h-[35px]">
            <Bar className="pr-[2px] pl-[3px]">
              <Tools
                names={[
                  "planeEye", "axisEye", "pntEye", "csysEye", "nodes", "notes", "dims", "infoBox", "infoDoc", "layers", "tag",
                  "tol", "orient", "views", "refit", "zoomWin", "zoomIn", "zoomOut", "saved",
                ]}
              />
            </Bar>
            <Bar className="pr-[3px] pl-1">
              <Tools names={["fitA", "ruler", "scale", "partN", "part1", "hatch", "hq", "whats", "check", "checkBox", "importBox"]} />
            </Bar>
          </div>
        </div>
        <button
          type="button"
          aria-label="Pro/ENGINEER"
          className="flex size-[34px] items-center justify-center border border-t-white border-r-[#716f64] border-b-[#716f64] border-l-white bg-white"
        >
          <svg viewBox="0 0 30 30" className="size-[30px]" fill="none">
            <path d="M25 17c-4 8-14 13-17 7S10 5 19 3s7 10 1 17c-3 3-6 5-9 6" stroke="#2a2a2a" strokeWidth="1.6" />
            <path d="M8 24C5 17 12 5 20 3" stroke="#111" strokeWidth="2.6" />
            <path d="M18 11l-4 9c0 2 2 1 4-1M14 12l4-1" stroke="#c8784c" strokeWidth="1.8" />
            <circle cx="20" cy="7" r="1.6" fill="#c8784c" />
          </svg>
        </button>
      </div>

      <div className="flex flex-1">
        <ModelTree />
        <Viewport />
        <aside className="w-[63px] shrink-0 pt-[2px] pr-[1px] pl-1">
          <div className="flex flex-col border-r border-b border-[#aca899]">
            <div className="h-[3px] border-y border-t-white border-b-[#aca899]" />
            <div className="flex items-start pt-1">
              <div className="flex flex-col">
                <Tools names={features} />
              </div>
              <ToolButton name="curve" />
            </div>
          </div>
        </aside>
      </div>

      <footer>
        <div className="flex h-[50px] border-t-2 border-b border-t-[#716f64] border-b-[#aca899] shadow-[inset_0_2px_#fff]">
          <ul className="flex-1 px-1 pt-[14px]">
            {["Modell TEST3 wird verarbeitet ...", "Zu 100% fertiggestellt."].map((m) => (
              <li key={m} className="flex h-4 items-center gap-[5px]">
                <span className="ml-[2px] size-[5px] rounded-full bg-[#0a0af0]" />
                {m}
              </li>
            ))}
          </ul>
          <div className="flex flex-col justify-between pt-[3px]">
            <ScrollButton dir="up" />
            <ScrollButton dir="down" />
          </div>
        </div>
        <div className="h-[23px]" />
      </footer>
    </div>
  );
}
